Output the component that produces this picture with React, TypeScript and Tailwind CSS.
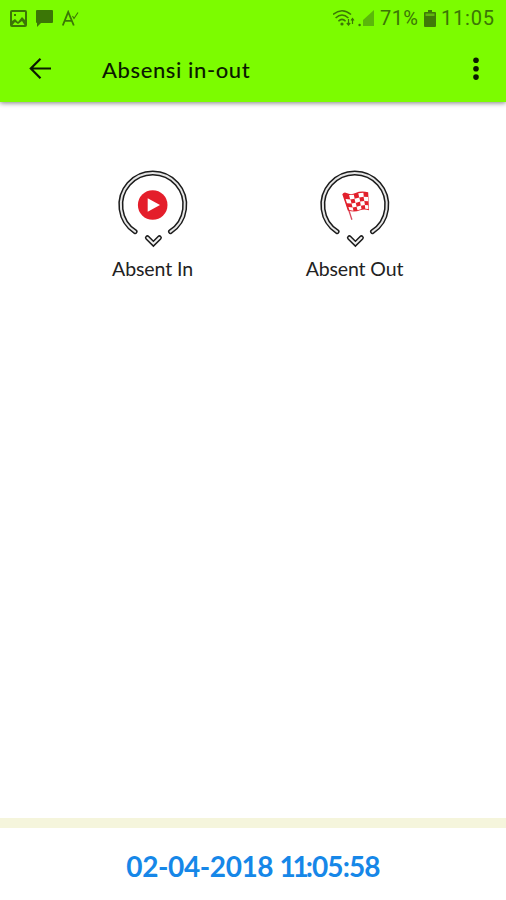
import React from "react";

function Ring({ children }: { children: React.ReactNode }) {
  const arc = "M22.1 66.2A32 32 0 1 1 57.5 66.2";
  const chevron = "M34.4 72.7L40.4 78.7L46.4 72.7";
  return (
    <svg width="80" height="84" viewBox="0 0 80 84" fill="none">
      <g strokeLinecap="round">
        <path d={arc} transform="translate(0 .5)" stroke="#1c1c1c" strokeWidth="5" />
        <path d={arc} transform="translate(0 .5)" stroke="#e6e6e6" strokeWidth="2" />
        <path d={chevron} stroke="#1c1c1c" strokeWidth="5" />
        <path d={chevron} stroke="#f0f0f0" strokeWidth="2" />
      </g>
      {children}
    </svg>
  );
}

function Flag() {
  return (
    <g>
      <path d="M28.6 29L36.9 54.8" stroke="#d64a5c" strokeWidth="1.3" />
      <path d="M27.3 29.3Q29 26.8 31.5 28Q36 30.3 40.5 28Q46 25.5 53.2 27.3L54 45.2Q49 43.6 45 45.3Q39.5 47.8 32.8 45.5Z" fill="#e2202c" />
      <g fill="#fff">
        <path d="M34.1 30L38.8 29.7L39.7 33.7L35.2 34.4Z" />
        <path d="M43.3 28.2L48.4 27.8L48.8 31.8L44.2 32.5Z" />
        <path d="M30.6 34L35.4 34.4L36.6 38.4L32 38.2Z" />
        <path d="M39.5 33.7L44.3 32.5L45.2 36.6L40.6 37.9Z" />
        <path d="M48.6 31.7L53 32L53.2 36.2L49.3 36Z" />
        <path d="M36.5 38.4L40.7 37.8L41.7 41.7L37.6 42.5Z" />
        <path d="M45.1 36.5L49.3 36L49.9 39.9L45.8 40.7Z" />
        <path d="M33.4 42L37.8 42.4L38.4 45.7L34.4 45.1Z" />
        <path d="M41.6 41.7L45.9 40.6L46.5 43.9L42.5 45.2Z" />
        <path d="M49.8 39.9L53.2 40.2L53.4 44.1L50.3 43.7Z" />
      </g>
    </g>
  );
}

export default function App() {
  return (
    <div className="flex h-[900px] w-[506px] flex-col overflow-hidden bg-white font-['Lato',sans-serif]">
      <header className="h-[102px] shrink-0 bg-[#7cfc00] shadow-[0_1px_5px_rgba(0,0,0,0.5)]">
        <div className="flex h-9 items-center justify-between pr-[11px] pl-[10px] text-[#3b7606]">
          <div className="flex items-center">
            <svg width="17" height="17" viewBox="0 0 17 17">
              <path fillRule="evenodd" fill="currentColor" d="M2 0H15Q17 0 17 2V15Q17 17 15 17H2Q0 17 0 15V2Q0 0 2 0ZM2 2V11L5 9L8 12L12 7L15 10V2ZM2.5 15H14.5L12 11L8 14L5 12ZM4 4H6V6H4Z" />
            </svg>
            <svg className="ml-[9px]" width="17" height="17" viewBox="0 0 17 17">
              <path fill="currentColor" d="M1 0H16Q17 0 17 1V12Q17 13 16 13H5L1 17V13Q0 13 0 12V1Q0 0 1 0Z" />
            </svg>
            <svg className="ml-[9px]" width="18" height="17" viewBox="0 0 18 17" fill="none" stroke="currentColor" strokeWidth="1.8">
              <path d="M.8 15.5L6.2 2L11.8 15.5M3 10.8H10" />
              <path d="M10.5 6L12 8.5L16 2.5" strokeWidth="1.1" />
            </svg>
          </div>
          <div className="flex items-center">
            <svg width="22" height="18" viewBox="0 0 22 18" fill="none" stroke="currentColor" strokeWidth="1.6">
              <path d="M0 5.5Q9 -2 18 5.5M2.6 9Q9 3 15.4 9M5.4 12.2Q9 8.6 12.6 12.2" />
              <circle cx="9" cy="15" r="1.6" fill="currentColor" stroke="none" />
              <path d="M15.5 10V16M13.8 14L15.5 16L17.2 14M19.5 15V9.5M18 11.5L19.5 9.5L21 11.5" strokeWidth="1.2" />
            </svg>
            <svg className="ml-[3px]" width="16" height="17" viewBox="0 0 16 17">
              <path d="M16 0V16H5V10Z" fill="#5ab80a" />
              <circle cx="1.6" cy="15" r="1.2" fill="currentColor" />
            </svg>
            <span className="ml-[6px] w-[42px] whitespace-nowrap font-['Roboto',sans-serif] text-[20px] tracking-[0.4px]">71%</span>
            <svg className="ml-[2px]" width="12" height="17" viewBox="0 0 12 17">
              <path d="M4 0H8V2H11Q12 2 12 3V16Q12 17 11 17H1Q0 17 0 16V3Q0 2 1 2H4Z" fill="#3f7a08" />
              <path d="M1.5 3.5H10.5V6H1.5Z" fill="#5eb80c" />
            </svg>
            <span className="ml-[5px] w-[54px] whitespace-nowrap font-['Roboto',sans-serif] text-[20px] tracking-[0.8px]">11:05</span>
          </div>
        </div>
        <div className="flex h-[66px] items-center pl-[28px] text-[#0b1a00]">
          <svg width="24" height="24" viewBox="0 0 24 24" fill="none" stroke="currentColor" strokeWidth="2.2">
            <path d="M23 11.5H3M12.5 1.8L2.8 11.5L12.5 21.2" />
          </svg>
          <h1 className="ml-[50px] whitespace-nowrap pt-px text-[22px] font-medium leading-6 tracking-[0.6px]">Absensi in-out</h1>
          <svg className="ml-auto mr-[26px]" width="8" height="24" viewBox="0 0 8 24" fill="currentColor">
            <circle cx="4" cy="3.3" r="2.8" />
            <circle cx="4" cy="11.7" r="2.8" />
            <circle cx="4" cy="20.1" r="2.8" />
          </svg>
        </div>
      </header>

      <main className="flex flex-1 items-start pt-[63px] pl-[51.5px]">
        <div className="flex w-[202px] flex-col items-center">
          <Ring>
            <circle cx="39.7" cy="40" r="14.8" fill="#e41e2b" />
            <path d="M34.7 33.2L47 40L34.7 46.8Z" fill="#fff" />
          </Ring>
          <span className="mt-[8px] whitespace-nowrap text-[19.5px] leading-6 tracking-[-0.1px] text-[#222]">Absent In</span>
        </div>
        <div className="flex w-[202px] flex-col items-center">
          <Ring>
            <Flag />
          </Ring>
          <span className="mt-[8px] whitespace-nowrap text-[19.5px] leading-6 tracking-[-0.12px] text-[#222]">Absent Out</span>
        </div>
      </main>

      <footer className="flex h-[82px] shrink-0 items-center justify-center border-t-[10px] border-[#f5f5dc] pt-[3px]">
        <p className="whitespace-nowrap text-[28px] font-bold leading-8 text-[#1687e8]">
          <span className="tracking-[-0.4px]">02-04-2018 </span>
          <span className="tracking-[-3.2px]">11</span>
          <span className="tracking-[-0.9px]">:05:58</span>
        </p>
      </footer>
    </div>
  );
}
